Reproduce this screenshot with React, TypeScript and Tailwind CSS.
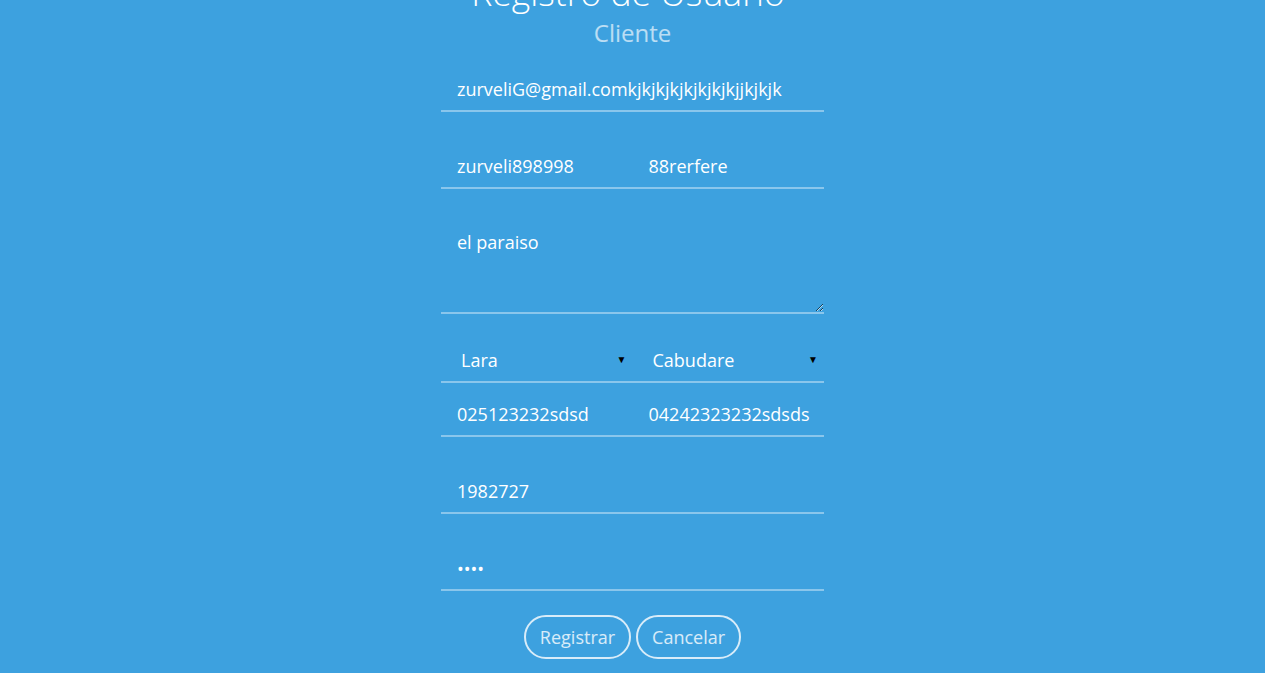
import React from "react";

const field =
  "w-full h-[45px] bg-transparent border-0 border-b-2 border-white/40 pl-4 pr-2 text-white text-[18px] outline-none";

export default function App() {
  return (
    <div
      className="min-h-screen w-full bg-[#3da1df] flex flex-col items-center overflow-hidden"
      style={{ fontFamily: '"Open Sans", sans-serif' }}
    >
      <h1 className="mt-[-30px] pr-[9px] h-[44px] leading-[44px] text-[35.5px] font-light text-white whitespace-nowrap">
        Registro de Usuario
      </h1>
      <h2 className="mt-[3px] h-[32px] leading-[32px] text-[24px] text-white/65">Cliente</h2>
      <form className="w-[383px] flex flex-col mt-[18px]">
        <input className={field} defaultValue="zurveliG@gmail.comkjkjkjkjkjkjkjkjjkjkjk" />
        <div className="grid grid-cols-2 mt-[32px]">
          <input className={field} defaultValue="zurveli898998" />
          <input className={field} defaultValue="88rerfere" />
        </div>
        <textarea
          className="mt-[30px] w-full h-[95px] bg-transparent border-0 border-b-2 border-white/40 px-4 pt-[11px] pb-3 leading-[24px] text-white text-[18px] outline-none block"
          defaultValue="el paraiso"
        />
        <div className="grid grid-cols-2 mt-[24px]">
          <div className="relative">
            <select className={field + " appearance-none pl-5 pt-[1px]"} defaultValue="Lara">
              <option>Lara</option>
            </select>
            <span className="absolute right-[6px] top-[14px] text-[10px] text-black pointer-events-none">▼</span>
          </div>
          <div className="relative">
            <select className={field + " appearance-none pl-5 pt-[1px]"} defaultValue="Cabudare">
              <option>Cabudare</option>
            </select>
            <span className="absolute right-[6px] top-[14px] text-[10px] text-black pointer-events-none">▼</span>
          </div>
        </div>
        <div className="grid grid-cols-2 mt-[9px]">
          <input className={field} defaultValue="025123232sdsd" />
          <input className={field} defaultValue="04242323232sdsds" />
        </div>
        <input className={field + " mt-[32px]"} defaultValue="1982727" />
        <input type="password" className={field + " mt-[32px] pt-[2px]"} defaultValue="1234" />
        <div className="flex justify-center gap-[5px] mt-[24px]">
          <button
            type="button"
            className="h-[44px] px-[14px] rounded-full border-2 border-white/80 text-white/80 text-[18px]"
          >
            Registrar
          </button>
          <button
            type="button"
            className="h-[44px] px-[14px] rounded-full border-2 border-white/80 text-white/80 text-[18px]"
          >
            Cancelar
          </button>
        </div>
      </form>
    </div>
  );
}
